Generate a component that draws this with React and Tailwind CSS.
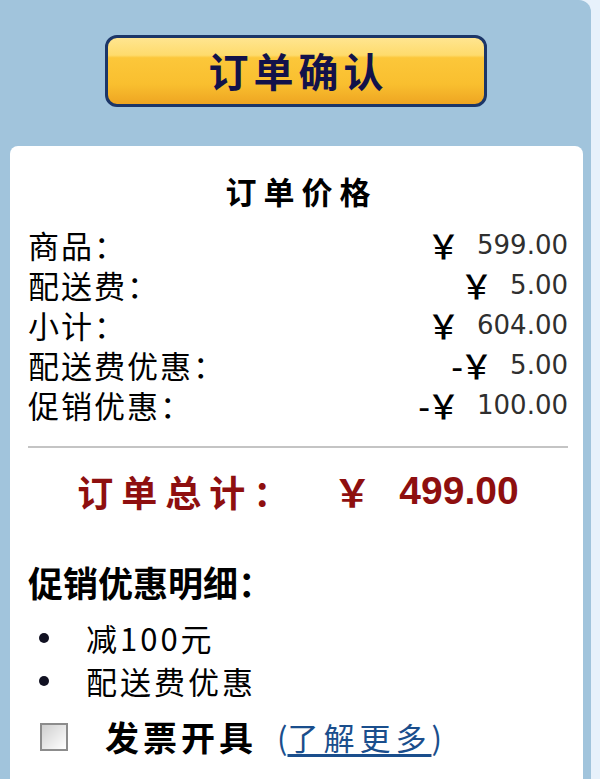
export default function App() {
  const rows = [
    { label: "商品：", prefix: "", value: "599.00" },
    { label: "配送费：", prefix: "", value: "5.00" },
    { label: "小计：", prefix: "", value: "604.00" },
    { label: "配送费优惠：", prefix: "-", value: "5.00" },
    { label: "促销优惠：", prefix: "-", value: "100.00" },
  ];
  return (
    <div className="w-[600px] h-[779px] flex bg-[#e7f1fb] overflow-hidden font-['Noto_Sans_CJK_SC',sans-serif]">
      <div className="w-[591px] h-full bg-[#a1c4dc] rounded-tr-[12px] flex flex-col pt-[35px]">
        <div className="self-start ml-[105px] w-[382px] h-[72px] rounded-[12px] border-[3px] border-[#1c3668] overflow-hidden bg-[linear-gradient(to_bottom,#ffe590_0%,#fedb6c_26%,#fcc73a_30%,#f9bf2f_70%,#eea522_100%)] flex items-center justify-center">
          <span className="text-[40px] font-bold text-[#12124a] tracking-[5px] leading-none pl-[5px] pb-[2px]">订单确认</span>
        </div>
        <div className="mt-[39px] ml-[10px] w-[573px] flex-1 bg-white rounded-t-[8px] pl-[18px] pr-[15px] pt-[25px]">
          <div className="text-center text-[31px] font-bold leading-[40px] tracking-[7px] text-black pl-[7px]">订单价格</div>
          <div className="mt-[14px] flex flex-col">
            {rows.map((r) => (
              <div key={r.label} className="flex justify-between items-center h-[40px]">
                <span className="text-[31px] leading-[40px] tracking-[2px] text-black">{r.label}</span>
                <span className="flex items-center">
                  <span className="text-[33px] font-medium leading-[40px] text-black tracking-[-3px]">{r.prefix}￥</span>
                  <span className="ml-[20px] font-['DejaVu_Sans',sans-serif] text-[26px] leading-[40px] text-[#2f2f2f]">{r.value}</span>
                </span>
              </div>
            ))}
          </div>
          <div className="mt-[21px] h-[2px] bg-[#c4c4c4]"></div>
          <div className="mt-[18px] h-[50px] flex items-center justify-center text-[#8e0f0f]">
            <span className="text-[36px] font-bold tracking-[8px] leading-[50px]">订单总计：</span>
            <span className="ml-[36px] text-[38px] font-bold leading-[50px]">￥</span>
            <span className="ml-[28px] font-['Liberation_Sans',sans-serif] text-[39px] font-bold leading-[50px]">499.00</span>
          </div>
          <div className="mt-[46px] text-[35px] font-bold leading-[40px] text-black tracking-[0px]">促销优惠明细：</div>
          <ul className="mt-[14px] flex flex-col">
            {["减100元", "配送费优惠"].map((t) => (
              <li key={t} className="flex items-center h-[43px]">
                <span className="ml-[11px] w-[10px] h-[10px] rounded-full bg-[#111122]"></span>
                <span className="ml-[37px] text-[31px] leading-[43px] tracking-[3px] text-black">{t}</span>
              </li>
            ))}
          </ul>
          <div className="mt-[13px] h-[44px] flex items-center">
            <span className="ml-[12px] w-[28px] h-[28px] border-2 border-[#8c8c8c] bg-[linear-gradient(135deg,#cfcfcf,#ffffff)]"></span>
            <span className="ml-[37px] text-[34px] font-bold leading-[44px] tracking-[4px] text-black">发票开具</span>
            <span className="ml-[20px] text-[31px] leading-[44px] text-[#1a4e8c]">
              (<span className="underline underline-offset-[4px] tracking-[5px]">了解更多</span>)
            </span>
          </div>
        </div>
      </div>
    </div>
  );
}
